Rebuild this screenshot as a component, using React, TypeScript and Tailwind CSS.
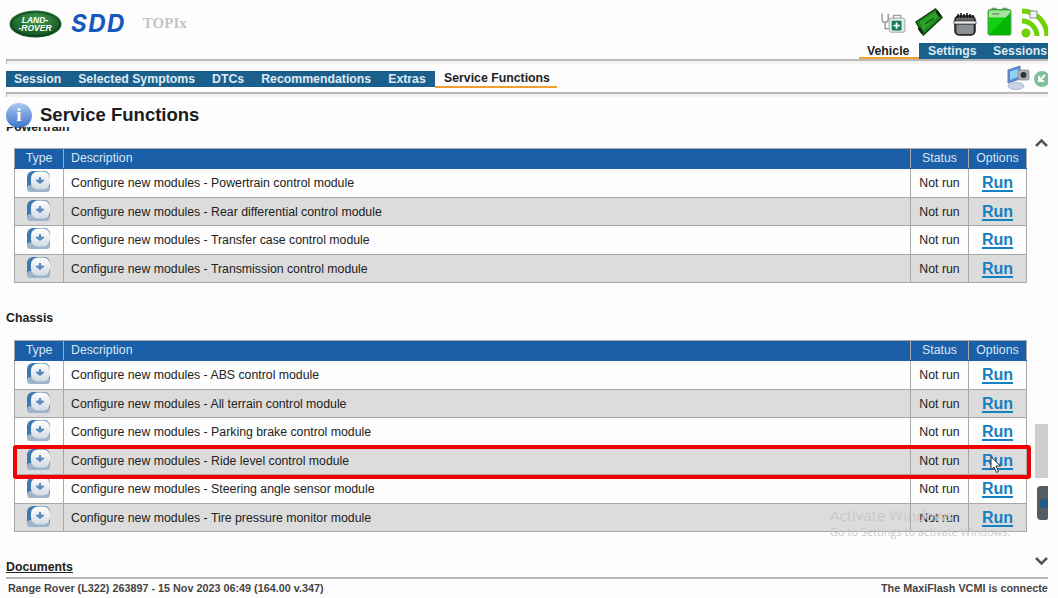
const powertrain = [
  "Configure new modules - Powertrain control module",
  "Configure new modules - Rear differential control module",
  "Configure new modules - Transfer case control module",
  "Configure new modules - Transmission control module",
];

const chassis = [
  "Configure new modules - ABS control module",
  "Configure new modules - All terrain control module",
  "Configure new modules - Parking brake control module",
  "Configure new modules - Ride level control module",
  "Configure new modules - Steering angle sensor module",
  "Configure new modules - Tire pressure monitor module",
];

const sessionTabs = ["Session", "Selected Symptoms", "DTCs", "Recommendations", "Extras"];

const TypeIcon = () => (
  <svg width="26" height="24" viewBox="0 0 26 24" className="block">
    <defs>
      <linearGradient id="face" x1="0" y1="0" x2="0" y2="1">
        <stop offset="0" stopColor="#ffffff" />
        <stop offset="1" stopColor="#d3dbe3" />
      </linearGradient>
    </defs>
    <rect x="1" y="1" width="23" height="21" rx="6" fill="#3f78ae" />
    <rect x="1" y="15" width="23" height="7" rx="3.5" fill="#9db4ca" />
    <rect x="5" y="1.5" width="19" height="18" rx="7" fill="url(#face)" />
    <path d="M13 7v2.500h-2l-1.500 1 4.500 3.500 4.500-3.500-1.500-1h-2V7z" fill="#5b8cbd" />
  </svg>
);

const LandRoverLogo = () => (
  <svg width="53" height="28" viewBox="0 0 53 28">
    <defs>
      <radialGradient id="oval" cx="0.5" cy="0.35" r="0.7">
        <stop offset="0" stopColor="#3f9a48" />
        <stop offset="1" stopColor="#0b4a1f" />
      </radialGradient>
    </defs>
    <ellipse cx="26.500" cy="14" rx="26" ry="13.500" fill="url(#oval)" />
    <ellipse cx="26.500" cy="14" rx="24" ry="11.800" fill="none" stroke="#0a3517" strokeWidth="0.800" />
    <text x="26" y="12.500" textAnchor="middle" fontSize="8.500" fontWeight="700" fontStyle="italic" fill="#fff" fontFamily="Liberation Sans, sans-serif">LAND-</text>
    <text x="26" y="21" textAnchor="middle" fontSize="8.500" fontWeight="700" fontStyle="italic" fill="#fff" fontFamily="Liberation Sans, sans-serif">-ROVER</text>
  </svg>
);

const KitIcon = () => (
  <svg width="27" height="23" viewBox="0 0 30 26" className="block">
    <path d="M2 3v6c0 5 7 5 7 0V3M5.500 13v7h4" fill="none" stroke="#8b9196" strokeWidth="1.500" />
    <rect x="10" y="8" width="18" height="16" rx="2" fill="#e3e8e6" stroke="#9aa1a3" />
    <path d="M15 8V5h8v3" fill="none" stroke="#9aa1a3" strokeWidth="1.500" />
    <rect x="13" y="11" width="11" height="11" rx="1" fill="#0f7f4f" />
    <path d="M17.500 13h2v2.500H22v2h-2.500V20h-2v-2.500H15v-2h2.500z" fill="#fff" />
  </svg>
);

const EcuIcon = () => (
  <svg width="28" height="28" viewBox="0 0 30 30" className="block">
    <path d="M1 15 22 1l7 9L9 29z" fill="#1d8a1d" stroke="#0f3d12" strokeWidth="1.500" />
    <path d="M5 15 22 4l3 5L9 24z" fill="#2fa12b" />
    <path d="M4 21l4 6M23 3l4 6" stroke="#0c2c0e" strokeWidth="3" />
    <path d="M11 17l9-6" stroke="#0e5c14" strokeWidth="1.500" />
  </svg>
);

const ChipIcon = () => (
  <svg width="24" height="26" viewBox="0 0 24 26" className="block">
    <rect x="2" y="5" width="20" height="19" rx="4" fill="#62676c" stroke="#1a1a1a" strokeWidth="1.500" />
    <rect x="1" y="10" width="22" height="3" fill="#e8e8e8" stroke="#222" strokeWidth="0.600" />
    <path d="M4 14h16v7a2 2 0 0 1-2 2H6a2 2 0 0 1-2-2z" fill="#8a8f94" />
    <path d="M5 7V3M8 7V2M11 7V3M14 7V2M17 7V3M20 7V4" stroke="#111" strokeWidth="1.500" />
  </svg>
);

const BatteryIcon = () => (
  <svg width="25" height="30" viewBox="0 0 28 34" className="block">
    <path d="M5 2h6v3H5zM17 2h6v3h-6z" fill="#6fa96f" />
    <rect x="1" y="4" width="26" height="29" rx="2" fill="#11d011" stroke="#4a8a4a" />
    <path d="M2 5h24v8H2z" fill="#a9e2a0" />
    <path d="M2 33 26 8v25z" fill="#06b506" />
    <path d="M6 9h8" stroke="#4b7f4b" strokeWidth="1.200" />
  </svg>
);

const FeedIcon = () => (
  <svg width="28" height="32" viewBox="0 0 28 32" className="block">
    <circle cx="6" cy="27" r="4.500" fill="#6fd100" />
    <path d="M2 15a15 15 0 0 1 15 15" fill="none" stroke="#6fd100" strokeWidth="5" />
    <path d="M2 5a25 25 0 0 1 25 25" fill="none" stroke="#6fd100" strokeWidth="5" />
    <rect x="10" y="5" width="7" height="7" fill="#eef2ee" stroke="#8a938a" />
  </svg>
);

const ComputerIcon = () => (
  <svg width="24" height="26" viewBox="0 0 24 26" className="block">
    <ellipse cx="9" cy="22" rx="8" ry="3.500" fill="#c9d3e6" stroke="#8fa0c0" strokeWidth="0.600" />
    <path d="M1 6l12-4v13L1 19z" fill="#4c8fe0" stroke="#6d7e9a" />
    <path d="M3 7.500l8-2.500v8l-8 3z" fill="#8fd0f5" />
    <rect x="11" y="6" width="11" height="10" rx="1.500" fill="#aeb2b6" stroke="#6f7478" strokeWidth="0.600" />
    <circle cx="16.500" cy="11" r="3" fill="#2e3338" />
  </svg>
);

const BackIcon = () => (
  <svg width="14" height="16" viewBox="0 0 14 16" className="block">
    <circle cx="8" cy="8" r="8" fill="#7fc09a" />
    <path d="M11 4 6 9M5 5v5h5" fill="none" stroke="#fff" strokeWidth="2" />
  </svg>
);

const ServiceTable = ({ rows }: { rows: string[] }) => (
  <div className="w-[1027px] pl-[14px]">
    <table className="w-full table-fixed border-collapse text-[12.300px] text-[#222]">
      <colgroup>
        <col className="w-[49px]" />
        <col />
        <col className="w-[58px]" />
        <col className="w-[58px]" />
      </colgroup>
      <thead>
        <tr className="h-[20px] bg-[#1a5fa8] text-[#d9e6f2]">
          <th className="border border-[#a8a8a8] border-b-[#1a5fa8] text-center font-normal">Type</th>
          <th className="border border-[#a8a8a8] border-b-[#1a5fa8] pl-[7px] text-left font-normal">Description</th>
          <th className="border border-[#a8a8a8] border-b-[#1a5fa8] text-center font-normal">Status</th>
          <th className="border border-[#a8a8a8] border-b-[#1a5fa8] text-center font-normal">Options</th>
        </tr>
      </thead>
      <tbody>
        {rows.map((row, i) => (
          <tr key={row} className={i % 2 === 0 ? "h-[28.500px] bg-[#fdfdfd]" : "h-[28.500px] bg-[#dcdcdc]"}>
            <td className="border border-[#a8a8a8] align-top">
              <div className="flex justify-center pt-[1px]">
                <TypeIcon />
              </div>
            </td>
            <td className="border border-[#a8a8a8] pt-[1px] pl-[7px]">{row}</td>
            <td className="border border-[#a8a8a8] pt-[1px] text-center">Not run</td>
            <td className="border border-[#a8a8a8] pt-[1px] text-center">
              <span className="text-[16px] font-bold text-[#1580c2] underline decoration-2 underline-offset-2">Run</span>
            </td>
          </tr>
        ))}
      </tbody>
    </table>
  </div>
);

const Scrollbar = () => (
  <div className="flex w-[13px] shrink-0 flex-col items-center">
    <svg width="13" height="10" viewBox="0 0 13 10" className="mt-[138px]">
      <path d="M1 8l5.500-5.500L12 8" fill="none" stroke="#555" strokeWidth="2.500" />
    </svg>
    <div className="mt-[276px] h-[54px] w-[13px] bg-[#cdcdcd]" />
    <div className="mt-[8px] flex h-[34px] w-[11px] items-center self-end rounded-l-[4px] rounded-br-[2px] bg-[#555c62] pl-[2px]">
      <div className="h-[9px] w-[9px] rounded-l-full bg-[#1f5a8c]" />
    </div>
    <svg width="13" height="10" viewBox="0 0 13 10" className="mt-[36px]">
      <path d="M1 2l5.500 5.500L12 2" fill="none" stroke="#555" strokeWidth="2.500" />
    </svg>
  </div>
);

export default function App() {
  return (
    <div className="relative h-[598px] w-[1058px] overflow-hidden bg-[#fdfdfd] font-['Liberation_Sans',sans-serif]">
      <div className="w-[1048px]">
        {/* top header */}
        <header className="flex h-[59px] justify-between">
          <div className="flex items-start pl-[9px] pt-[10px]">
            <LandRoverLogo />
            <span className="ml-[9px] font-['Inter',sans-serif] text-[24px] leading-[27px] font-bold tracking-[1.5px] text-[#1558c0] italic">SDD</span>
            <span className="mt-[4px] ml-[17px] font-['Liberation_Serif',serif] text-[15px] leading-[18px] font-bold text-[#c4c4c4]">TOPIx</span>
          </div>
          <div className="flex flex-col items-end">
            <div className="flex h-[43px] items-start">
              <div className="mt-[11px] mr-[8px]"><KitIcon /></div>
              <div className="mt-[8px] mr-[10px]"><EcuIcon /></div>
              <div className="mt-[11px] mr-[10px]"><ChipIcon /></div>
              <div className="mt-[6px] mr-[8px]"><BatteryIcon /></div>
              <div className="mt-[6px]"><FeedIcon /></div>
            </div>
            <div className="flex h-[16px] text-[12.300px] leading-[16px] font-bold">
              <span className="w-[60px] border-b-2 border-[#f0a030] pl-[8px] text-[#222]">Vehicle</span>
              <span className="w-[65px] bg-[#1b5f8c] pl-[9px] text-[#dfeaf2]">Settings</span>
              <span className="w-[64px] bg-[#1b5f8c] pl-[9px] whitespace-nowrap text-[#dfeaf2]">Sessions</span>
            </div>
          </div>
        </header>

        <div className="ml-[6px] h-[5px] border-t-2 border-l border-[#b9b9b9] bg-[#f3f3f3]" />

        {/* session nav */}
        <nav className="mt-[7px] flex h-[16px] justify-between pl-[6px]">
          <div className="flex text-[12.300px] font-bold">
            <div className="flex h-[16px] w-[429px] bg-[#1b5f8c] pl-[8px] leading-[17px] text-[#dfeaf2]">
              {sessionTabs.map((tab, i) => (
                <span key={tab} className={i === 0 ? "" : "ml-[17px]"}>{tab}</span>
              ))}
            </div>
            <span className="h-[17px] w-[122px] border-b-2 border-[#f0a030] pl-[9px] leading-[15px] text-[#222]">Service Functions</span>
          </div>
          <div className="-mt-[7px] flex gap-[3px]">
            <ComputerIcon />
            <div className="mt-[7px] w-[14px] overflow-hidden"><BackIcon /></div>
          </div>
        </nav>

        <div className="mt-[5px] ml-[6px] h-[5px] border-t-2 border-l border-[#b9b9b9] bg-[#f3f3f3]" />

        {/* page title */}
        <div className="flex h-[30px] items-center gap-[8px] pt-[5px] pl-[6px]">
          <div className="mt-[2px] flex h-[25px] w-[26px] items-center justify-center rounded-full bg-gradient-to-b from-[#a9c8f0] to-[#3f74c8] font-['Liberation_Serif',serif] text-[19px] font-bold text-white">i</div>
          <h1 className="text-[18.500px] font-bold text-[#1c1c1c]">Service Functions</h1>
        </div>

        <main>
          {/* first heading is scrolled under the title */}
          <div className="h-[5px] overflow-hidden pl-[6px]">
            <p className="-mt-[7px] text-[12.300px] leading-[14px] font-bold text-[#222]">Powertrain</p>
          </div>
          <div className="mt-[16px]">
            <ServiceTable rows={powertrain} />
          </div>
          <h2 className="mt-[27px] pl-[6px] text-[12.300px] leading-[16px] font-bold text-[#222]">Chassis</h2>
          <div className="mt-[14px]">
            <ServiceTable rows={chassis} />
          </div>
          <h2 className="mt-[28px] pl-[6px] text-[12.300px] leading-[14px] font-bold text-[#222] underline">Documents</h2>
        </main>
      </div>

      {/* right scroller sits over the page */}
      <div className="absolute top-0 right-[10px] h-[570px]">
        <Scrollbar />
      </div>

      {/* status bar */}
      <footer className="absolute bottom-0 left-[6px] flex h-[21px] w-[1042px] justify-between border-t-2 border-[#b9b9b9] pt-[1px] pl-[2px] text-[10.800px] font-bold whitespace-nowrap text-[#444]">
        <span>Range Rover (L322) 263897 - 15 Nov 2023 06:49 (164.00 v.347)</span>
        <span className="w-[167px] overflow-hidden">The MaxiFlash VCMI is connected</span>
      </footer>

      {/* highlight drawn on the video */}
      <div className="absolute top-[445px] left-[13px] h-[34px] w-[1018px] rounded-[3px] border-[4px] border-[#f00000]" />

      {/* cursor */}
      <svg width="12" height="18" viewBox="0 0 12 18" className="absolute top-[456px] left-[990px]">
        <path d="M1 1v13l3-3 2.500 5.500 2-1L6 10h4.500z" fill="#fff" stroke="#333" strokeWidth="1" />
      </svg>

      {/* activation watermark */}
      <div className="pointer-events-none absolute top-[506px] left-[830px] font-['Open_Sans',sans-serif] whitespace-nowrap text-[#c8c8c8]">
        <div className="text-[15px] leading-[18px]">Activate Windows</div>
        <div className="text-[11px] leading-[16px]">Go to Settings to activate Windows.</div>
      </div>
    </div>
  );
}
